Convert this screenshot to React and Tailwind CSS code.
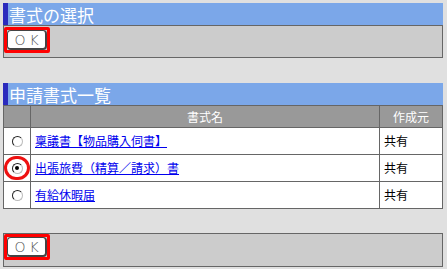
import React from 'react'

const font = { fontFamily: '"Noto Sans CJK JP", "MS PGothic", sans-serif' }

function OkButton() {
  return (
    <div className="w-[46px] h-[26px] border-[3px] border-[#ff0000] rounded-[2px] flex">
      <button
        className="flex-1 bg-white border border-[#444] border-b-2 border-r-2 rounded-[4px] text-[14px] font-extralight leading-none text-[#555] tracking-[4px] pl-[4px] flex items-center justify-center"
        style={{ fontFamily: '"DejaVu Sans", sans-serif' }}
      >
        OK
      </button>
    </div>
  )
}

function SectionHeader({ title }) {
  return (
    <div className="h-[22px] bg-[#7ba7e9] border-l-[5px] border-[#2b2bbd] flex items-center pl-[1px] text-white text-[17px] leading-none">
      {title}
    </div>
  )
}

function Radio({ checked }) {
  return (
    <div className="relative w-[11px] h-[11px]">
      {checked && (
        <div className="absolute -left-[8px] -top-[7px] w-[26px] h-[24px] rounded-full border-[3px] border-[#ee1111]" />
      )}
      <div className="w-[11px] h-[11px] rounded-full bg-white border border-[#222] border-r-[#bbb] border-b-[#bbb] flex items-center justify-center">
        {checked && <div className="w-[4px] h-[4px] rounded-full bg-black" />}
      </div>
    </div>
  )
}

const rows = [
  { name: '稟議書【物品購入伺書】', owner: '共有', checked: false },
  { name: '出張旅費（精算／請求）書', owner: '共有', checked: true },
  { name: '有給休暇届', owner: '共有', checked: false },
]

export default function App() {
  return (
    <div className="w-[447px] h-[269px] bg-[#e0e0e0] pt-[3px] pl-[3px] pr-[4px] overflow-hidden" style={font}>
      {/* 書式の選択 */}
      <SectionHeader title="書式の選択" />
      <div className="h-[33px] bg-[#cccccc] border border-[#666] pt-[1px]">
        <OkButton />
      </div>

      {/* 申請書式一覧 */}
      <div className="mt-[25px]">
        <SectionHeader title="申請書式一覧" />
        <table className="w-full border-collapse text-[12px] leading-none">
          <thead>
            <tr className="h-[22px] bg-[#999999] text-white">
              <th className="w-[27px] border border-[#666]"></th>
              <th className="border border-[#666] font-normal">書式名</th>
              <th className="w-[63px] border border-[#666] font-normal">作成元</th>
            </tr>
          </thead>
          <tbody className="bg-white">
            {rows.map(r => (
              <tr key={r.name} className="h-[27px]">
                <td className="border border-[#666]">
                  <div className="flex justify-center">
                    <Radio checked={r.checked} />
                  </div>
                </td>
                <td className="border border-[#666] pl-[4px]">
                  <a href="#" className="text-[#0000ee] underline">{r.name}</a>
                </td>
                <td className="border border-[#666] pl-[4px] text-black">{r.owner}</td>
              </tr>
            ))}
          </tbody>
        </table>
      </div>

      <div className="mt-[24px] h-[34px] bg-[#cccccc] border border-[#666]">
        <OkButton />
      </div>
    </div>
  )
}
